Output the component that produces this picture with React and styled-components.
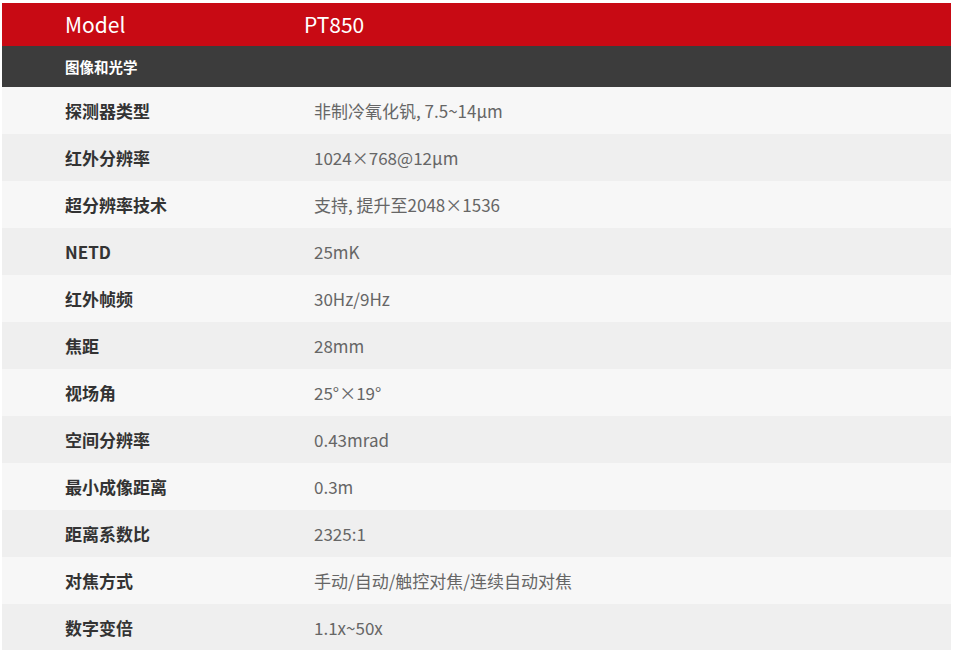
import React from 'react'
import styled, { createGlobalStyle } from 'styled-components'

const Global = createGlobalStyle`
  body {
    margin: 0;
    background: #fff;
    font-family: "Noto Sans CJK SC", "Noto Sans", sans-serif;
  }
`

const Sheet = styled.div`
  &{
    width: 949px;
    margin: 3px 0 0 2px;
    display: flex;
    flex-direction: column;
  }
`

const Head = styled.div`
  &{
    height: 43px;
    box-sizing: border-box;
    padding-bottom: 2px;
    background-color: #c80a14;
    color: #fff;
    font-size: 21px;
    display: flex;
    align-items: center;
  }
`

const HeadLabel = styled.div`
  &{
    width: 239px;
    padding-left: 63px;
  }
`

const Section = styled.div`
  &{
    height: 41px;
    background-color: #3c3c3c;
    color: #fff;
    font-size: 14.5px;
    font-weight: bold;
    display: flex;
    align-items: center;
    padding-left: 63px;
  }
`

const Row = styled.div`
  &{
    height: 47px;
    display: flex;
    align-items: center;
    background-color: ${p => (p.$odd ? '#efefef' : '#f7f7f7')};
    font-size: 17px;
  }
`

const Label = styled.div`
  &{
    width: 249px;
    padding-left: 63px;
    font-weight: bold;
    color: #333;
  }
`

const Value = styled.div`
  &{
    color: #666;
  }
`

const specs = [
  ['探测器类型', '非制冷氧化钒, 7.5~14µm'],
  ['红外分辨率', '1024×768@12µm'],
  ['超分辨率技术', '支持, 提升至2048×1536'],
  ['NETD', '25mK'],
  ['红外帧频', '30Hz/9Hz'],
  ['焦距', '28mm'],
  ['视场角', '25°×19°'],
  ['空间分辨率', '0.43mrad'],
  ['最小成像距离', '0.3m'],
  ['距离系数比', '2325:1'],
  ['对焦方式', '手动/自动/触控对焦/连续自动对焦'],
  ['数字变倍', '1.1x~50x'],
]

export default function App() {
  return (
    <>
      <Global />
      <Sheet>
        <Head>
          <HeadLabel>Model</HeadLabel>
          <div>PT850</div>
        </Head>
        <Section>图像和光学</Section>
        {specs.map(([k, v], i) => (
          <Row key={k} $odd={i % 2 === 1}>
            <Label>{k}</Label>
            <Value>{v}</Value>
          </Row>
        ))}
      </Sheet>
    </>
  )
}
